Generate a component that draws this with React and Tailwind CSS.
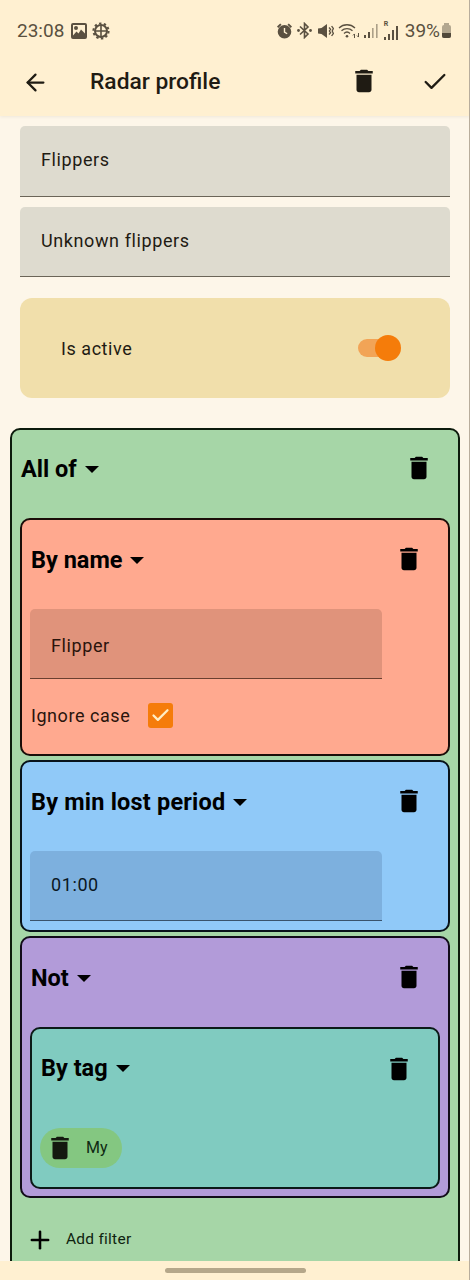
import React from "react";
import { ArrowLeft, Check, Plus } from "lucide-react";

const DeleteIcon = ({ size = 30, className = "" }) => (
  <svg width={size} height={size} viewBox="0 0 24 24" fill="currentColor" className={className}>
    <path d="M6 19c0 1.1.9 2 2 2h8c1.1 0 2-.9 2-2V7H6v12zM19 4h-3.5l-1-1h-5l-1 1H5v2h14V4z" />
  </svg>
);

const StatusLeft = () => (
  <div className="flex items-center gap-[5px]">
    <span className="text-[19px] leading-none mr-[2px]">23:08</span>
    <svg width="16" height="16" viewBox="0 0 16 16" fill="currentColor">
      <path fillRule="evenodd" d="M2 0h12a2 2 0 0 1 2 2v12a2 2 0 0 1-2 2H2a2 2 0 0 1-2-2V2a2 2 0 0 1 2-2zm0 12.5 3.5-4 2 2L10 6.5l4 4V2H2zM5 3a2 2 0 1 1 0 4 2 2 0 0 1 0-4z" />
    </svg>
    <svg width="18" height="18" viewBox="0 0 18 18" fill="none" stroke="currentColor">
      <circle cx="9" cy="9" r="6" strokeWidth="2" />
      <path d="M3 9h12M9 3v12" strokeWidth="1.6" />
      <circle cx="9" cy="9" r="7.6" strokeWidth="2" strokeDasharray="2.4 2.4" />
    </svg>
  </div>
);

const StatusRight = () => (
  <div className="flex items-center">
    <svg width="15" height="16" viewBox="0 0 15 16" fill="currentColor" className="mr-[5px]">
      <path fillRule="evenodd" d="M7.5 2a6.8 6.8 0 1 1 0 13.6A6.8 6.8 0 0 1 7.5 2zM6.8 5v4.6l3 1.7.7-1.1-2.3-1.4V5z" />
      <path d="M0 3.5 3.2.5l1.3 1.2L1.3 4.9zM15 3.5 11.8.5l-1.3 1.2 3.2 3.2z" />
    </svg>
    <svg width="15" height="17" viewBox="0 0 15 17" fill="none" stroke="currentColor" strokeWidth="1.6" className="mr-[6px]">
      <path d="M3 4.5 11 12l-3.5 3.5v-14L11 5l-8 7.5" />
      <circle cx="1.5" cy="8.5" r="1.4" fill="currentColor" stroke="none" />
      <circle cx="13.5" cy="8.5" r="1.4" fill="currentColor" stroke="none" />
    </svg>
    <svg width="16" height="16" viewBox="0 0 16 16" fill="currentColor" className="mr-[4px]">
      <path d="M0 5.5 3.5 5 9 1v14l-5.5-4L0 10.5z" />
      <path d="M11 4.5l1.6 1.7-1.2 1.8 1.2 1.8L11 11.5M13.6 3l1.8 2.6-1.2 2.4 1.2 2.4-1.8 2.6" fill="none" stroke="currentColor" strokeWidth="1.3" />
    </svg>
    <svg width="23" height="17" viewBox="0 0 23 17" fill="none" stroke="currentColor" strokeWidth="1.3" className="mr-[3px]">
      <path d="M1 6a11.5 11.5 0 0 1 16 0M3.5 8.8a8 8 0 0 1 11 0M6 11.4a4.4 4.4 0 0 1 6 0" />
      <circle cx="9" cy="14.2" r="1.3" fill="currentColor" stroke="none" />
      <path d="M16.5 16v-4M15 13.4l1.5-1.5M20.5 11v4M19 13.6l1.5 1.5" strokeWidth="1" />
    </svg>
    <svg width="15" height="15" viewBox="0 0 15 15" fill="currentColor" className="mr-[5px]">
      <rect x="0" y="12" width="2" height="3" />
      <rect x="4" y="9" width="2" height="6" />
      <rect x="8" y="5" width="1.6" height="10" opacity="0.5" />
      <rect x="12" y="1" width="1.6" height="14" opacity="0.5" />
    </svg>
    <div className="relative w-[15px] h-[19px] mr-[6px]">
      <span className="absolute left-0 top-0 text-[7px] leading-none font-bold">R</span>
      <svg width="15" height="15" viewBox="0 0 15 15" fill="currentColor" className="absolute left-0 bottom-0">
        <rect x="0" y="12" width="2" height="3" />
        <rect x="4" y="9" width="2" height="6" />
        <rect x="8" y="5" width="2" height="10" />
        <rect x="12" y="1" width="2" height="14" />
      </svg>
    </div>
    <span className="text-[19px] leading-none mr-[2px]">39%</span>
    <div className="flex flex-col items-center">
      <div className="w-[5px] h-[2px] bg-[#b3a78f]" />
      <div className="w-[9px] h-[13px] rounded-[2px] bg-[#b3a78f] flex flex-col justify-end overflow-hidden">
        <div className="h-[5px] bg-[#51493a]" />
      </div>
    </div>
  </div>
);

const FilledField = ({ text, className, textClass = "", height = "h-[70px]" }) => (
  <div className={`${height} ${className} rounded-t-[5px] border-b flex items-center pl-[21px] text-[18px] tracking-[0.6px]`}>
    <span className={textClass}>{text}</span>
  </div>
);

const FilterHead = ({ title, titleClass = "", trashClass, height = "h-[81px]" }) => (
  <div className={`${height} flex items-center justify-between`}>
    <div className="flex items-center ml-[1px]">
      <span className={`text-[23.5px] font-bold leading-none ${titleClass}`}>{title}</span>
      <svg width="14" height="7" viewBox="0 0 14 7" fill="currentColor" className="ml-[8px]">
        <path d="M0 0h14L7 7z" />
      </svg>
    </div>
    <DeleteIcon className={trashClass} />
  </div>
);

export default function App() {
  return (
    <div className="relative w-[470px] h-[1280px] flex flex-col overflow-hidden bg-[#fdf6e9] text-[#1f1b13] font-['Roboto',sans-serif]">
      <header className="h-[116px] shrink-0 bg-[#fff0d1] shadow-[0_1px_3px_rgba(0,0,0,0.06)] z-10">
        <div className="h-[60px] flex items-center justify-between pl-[17px] pr-[19px] text-[#5a5040] pt-[1px]">
          <StatusLeft />
          <StatusRight />
        </div>
        <div className="h-[44px] flex items-center pl-[22px] pr-[21px]">
          <ArrowLeft size={27} strokeWidth={2} />
          <h1 className="ml-[41px] text-[22.8px] font-medium leading-none flex-1">Radar profile</h1>
          <DeleteIcon className="mb-[2px] mr-[1px]" />
          <Check size={28} strokeWidth={2} className="ml-[41px]" />
        </div>
      </header>

      <main className="flex-1 min-h-0 overflow-hidden pt-[10px]">
        <div className="px-5 flex flex-col gap-[10px]">
          <FilledField text="Flippers" height="h-[71px]" textClass="mb-[3px]" className="bg-[#dedbcf] border-[#6b6558]" />
          <FilledField text="Unknown flippers" textClass="mb-[2px]" className="bg-[#dedbcf] border-[#6b6558]" />
        </div>
        <div className="mx-5 mt-[21px] h-[100px] rounded-[12px] bg-[#f1dfab] flex items-center justify-between pl-[41px] pr-[49px]">
          <span className="text-[18px] tracking-[0.55px] mt-[1px]">Is active</span>
          <div className="relative w-[43px] h-[26px] flex items-center">
            <div className="w-[40px] h-[18px] rounded-full bg-[#f2a456]" />
            <div className="absolute right-0 top-0 w-[26px] h-[26px] rounded-full bg-[#f57c0a]" />
          </div>
        </div>

        <section className="mx-[10px] mt-[30px] border-2 border-[#0c1a0c] rounded-[10px] bg-[#a6d6a7] px-2 pb-10 text-black">
          <FilterHead title="All of" trashClass="mr-[16px] mb-[4px]" height="h-[79px]" />
          <div className="mt-[9px] flex flex-col gap-[4px]">
            <div className="border-2 border-[#1a0d08] rounded-[10px] bg-[#ffa98f] px-2 h-[238px]">
              <FilterHead title="By name" trashClass="mr-[16px] mb-[4px]" />
              <FilledField text="Flipper" textClass="mt-[3px]" className="mt-[8px] w-[352px] bg-[#e0937b] border-[#6a3f30] text-[#2a140c]" />
              <div className="mt-[23px] flex items-center text-[18px] tracking-[0.55px] text-[#2a140c]">
                <span className="ml-[1px]">Ignore case</span>
                <div className="ml-[18px] w-[25px] h-[25px] rounded-[3px] bg-[#f57c0a] flex items-center justify-center">
                  <Check size={21} strokeWidth={2.6} className="text-[#ffeec4]" />
                </div>
              </div>
            </div>
            <div className="border-2 border-[#08121a] rounded-[10px] bg-[#90c9f8] px-2 h-[172px]">
              <FilterHead title="By min lost period" titleClass="tracking-[0.2px]" trashClass="mr-[16px] mb-[4px]" />
              <FilledField text="01:00" textClass="mb-[3px]" className="mt-[8px] w-[352px] bg-[#7db0de] border-[#39536c] text-[#0a1722]" />
            </div>
            <div className="border-2 border-[#120c1a] rounded-[10px] bg-[#b29bd9] px-2 h-[262px]">
              <FilterHead title="Not" trashClass="mr-[16px] mb-[4px]" height="h-[81px]" />
              <div className="mt-[8px] border-2 border-[#0b1a18] rounded-[10px] bg-[#80cbc0] px-2 h-[162px]">
                <FilterHead title="By tag" trashClass="mr-[16px]" height="h-[79px]" />
                <div className="mt-[20px] flex items-center w-[82px] h-[40px] rounded-full bg-[#84c781] pl-[5px]">
                  <DeleteIcon className="text-[#14190f]" />
                  <span className="ml-[11px] text-[16px] text-[#0f2a12]">My</span>
                </div>
              </div>
            </div>
          </div>
          <div className="mt-[28px] flex items-center pl-[6px] text-[#0f2410]">
            <Plus size={28} strokeWidth={2.2} className="text-black" />
            <span className="ml-[12px] text-[15.5px] tracking-[0.25px]">Add filter</span>
          </div>
        </section>
      </main>

      <footer className="h-[19px] shrink-0 bg-[#fff0d1] flex justify-center pt-[7px] z-10">
        <div className="w-[141px] h-[5px] rounded-full bg-[#b5a78a]" />
      </footer>
      <div className="absolute inset-y-0 right-0 w-px bg-[#b8ad9c] z-20" />
    </div>
  );
}
